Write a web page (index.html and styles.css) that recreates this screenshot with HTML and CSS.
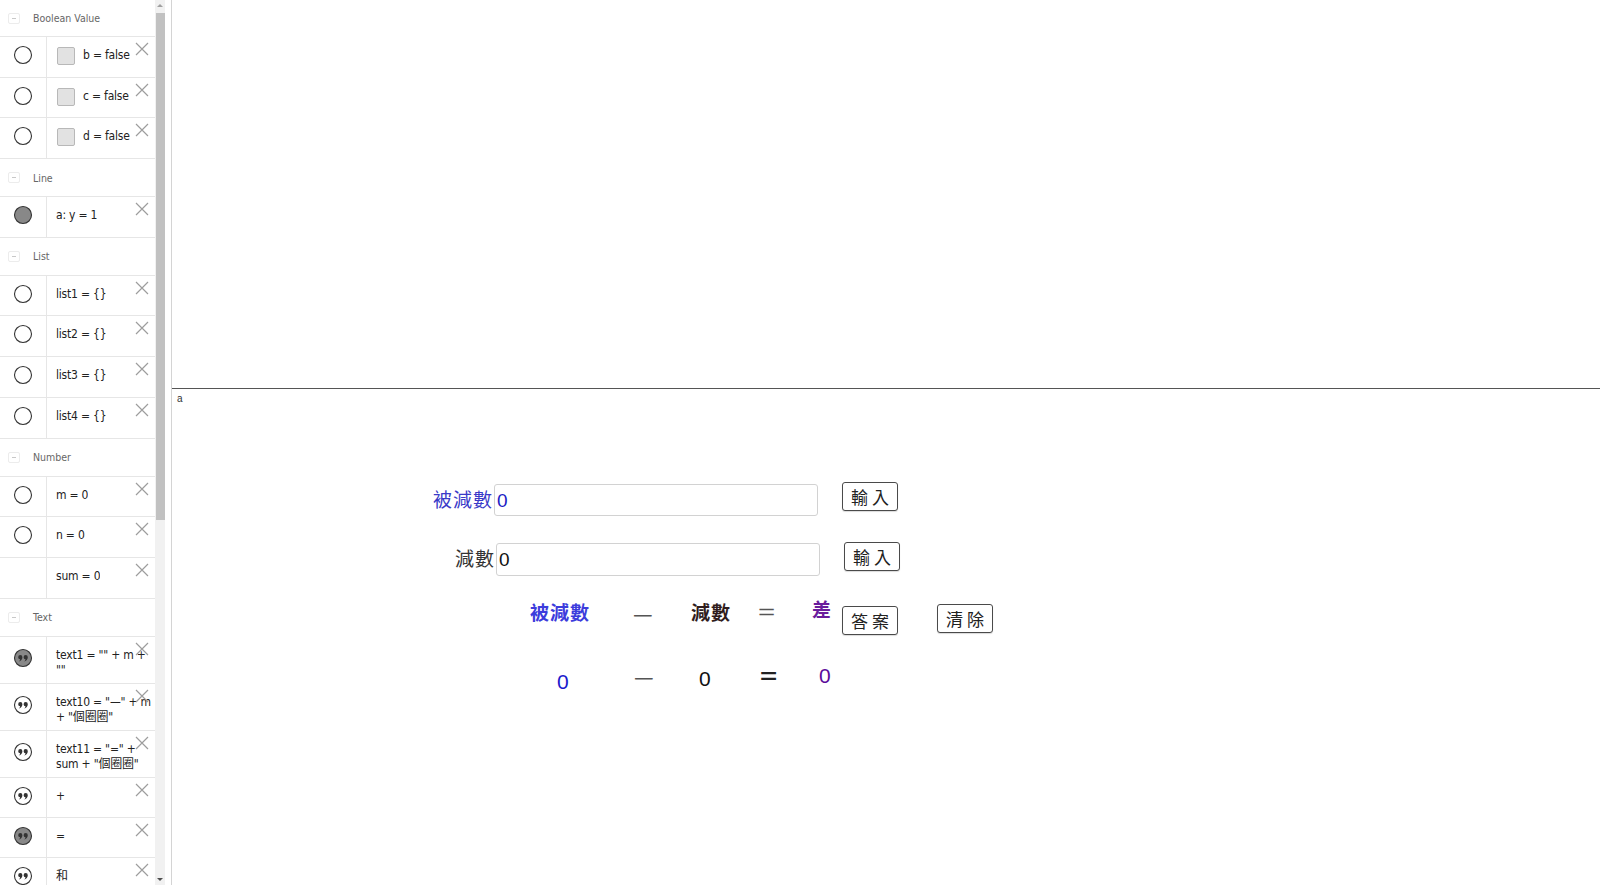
FILE: index.html
```html
<!DOCTYPE html>
<html lang="zh-Hant">
<head>
    <meta charset="UTF-8">
    <title>被減數 減數 = 差</title>
    <link rel="stylesheet" href="styles.css">
</head>
<body>

    <!-- Algebra view -->
    <aside class="algebra">
        <div class="group"><span class="toggle"></span>Boolean Value</div>
        <div class="item">
            <div class="marble"><svg width="20" height="20"><circle cx="10" cy="10" r="8.5" class="ring"/></svg></div>
            <div class="item-body"><span class="check"></span>b = false</div>
            <svg class="del" width="14" height="14"><path d="M1 1 L13 13 M13 1 L1 13"/></svg>
        </div>
        <div class="item">
            <div class="marble"><svg width="20" height="20"><circle cx="10" cy="10" r="8.5" class="ring"/></svg></div>
            <div class="item-body"><span class="check"></span>c = false</div>
            <svg class="del" width="14" height="14"><path d="M1 1 L13 13 M13 1 L1 13"/></svg>
        </div>
        <div class="item">
            <div class="marble"><svg width="20" height="20"><circle cx="10" cy="10" r="8.5" class="ring"/></svg></div>
            <div class="item-body"><span class="check"></span>d = false</div>
            <svg class="del" width="14" height="14"><path d="M1 1 L13 13 M13 1 L1 13"/></svg>
        </div>

        <div class="group"><span class="toggle"></span>Line</div>
        <div class="item">
            <div class="marble"><svg width="20" height="20"><circle cx="10" cy="10" r="8.5" class="ring on"/></svg></div>
            <div class="item-body">a: y = 1</div>
            <svg class="del" width="14" height="14"><path d="M1 1 L13 13 M13 1 L1 13"/></svg>
        </div>

        <div class="group"><span class="toggle"></span>List</div>
        <div class="item">
            <div class="marble"><svg width="20" height="20"><circle cx="10" cy="10" r="8.5" class="ring"/></svg></div>
            <div class="item-body">list1 = {}</div>
            <svg class="del" width="14" height="14"><path d="M1 1 L13 13 M13 1 L1 13"/></svg>
        </div>
        <div class="item">
            <div class="marble"><svg width="20" height="20"><circle cx="10" cy="10" r="8.5" class="ring"/></svg></div>
            <div class="item-body">list2 = {}</div>
            <svg class="del" width="14" height="14"><path d="M1 1 L13 13 M13 1 L1 13"/></svg>
        </div>
        <div class="item">
            <div class="marble"><svg width="20" height="20"><circle cx="10" cy="10" r="8.5" class="ring"/></svg></div>
            <div class="item-body">list3 = {}</div>
            <svg class="del" width="14" height="14"><path d="M1 1 L13 13 M13 1 L1 13"/></svg>
        </div>
        <div class="item">
            <div class="marble"><svg width="20" height="20"><circle cx="10" cy="10" r="8.5" class="ring"/></svg></div>
            <div class="item-body">list4 = {}</div>
            <svg class="del" width="14" height="14"><path d="M1 1 L13 13 M13 1 L1 13"/></svg>
        </div>

        <div class="group"><span class="toggle"></span>Number</div>
        <div class="item">
            <div class="marble"><svg width="20" height="20"><circle cx="10" cy="10" r="8.5" class="ring"/></svg></div>
            <div class="item-body">m = 0</div>
            <svg class="del" width="14" height="14"><path d="M1 1 L13 13 M13 1 L1 13"/></svg>
        </div>
        <div class="item">
            <div class="marble"><svg width="20" height="20"><circle cx="10" cy="10" r="8.5" class="ring"/></svg></div>
            <div class="item-body">n = 0</div>
            <svg class="del" width="14" height="14"><path d="M1 1 L13 13 M13 1 L1 13"/></svg>
        </div>
        <div class="item">
            <div class="marble"></div>
            <div class="item-body">sum = 0</div>
            <svg class="del" width="14" height="14"><path d="M1 1 L13 13 M13 1 L1 13"/></svg>
        </div>

        <div class="group"><span class="toggle"></span>Text</div>
        <div class="item tall">
            <div class="marble"><svg width="20" height="20"><circle cx="10" cy="10" r="8.5" class="ring on"/><path class="quote" d="M5.2 9.2a2.1 2.1 0 1 1 4.2 0c0 2.3-1.5 3.8-3.6 4.3c.9-.7 1.3-1.4 1.3-2.2a2.1 2.1 0 0 1-1.9-2.1zM10.6 9.2a2.1 2.1 0 1 1 4.2 0c0 2.3-1.5 3.8-3.6 4.3c.9-.7 1.3-1.4 1.3-2.2a2.1 2.1 0 0 1-1.9-2.1z"/></svg></div>
            <div class="item-body">text1 = "" + m +<br>""</div>
            <svg class="del" width="14" height="14"><path d="M1 1 L13 13 M13 1 L1 13"/></svg>
        </div>
        <div class="item tall">
            <div class="marble"><svg width="20" height="20"><circle cx="10" cy="10" r="8.5" class="ring"/><path class="quote" d="M5.2 9.2a2.1 2.1 0 1 1 4.2 0c0 2.3-1.5 3.8-3.6 4.3c.9-.7 1.3-1.4 1.3-2.2a2.1 2.1 0 0 1-1.9-2.1zM10.6 9.2a2.1 2.1 0 1 1 4.2 0c0 2.3-1.5 3.8-3.6 4.3c.9-.7 1.3-1.4 1.3-2.2a2.1 2.1 0 0 1-1.9-2.1z"/></svg></div>
            <div class="item-body">text10 = "—" + m<br>+ "個圈圈"</div>
            <svg class="del" width="14" height="14"><path d="M1 1 L13 13 M13 1 L1 13"/></svg>
        </div>
        <div class="item tall">
            <div class="marble"><svg width="20" height="20"><circle cx="10" cy="10" r="8.5" class="ring"/><path class="quote" d="M5.2 9.2a2.1 2.1 0 1 1 4.2 0c0 2.3-1.5 3.8-3.6 4.3c.9-.7 1.3-1.4 1.3-2.2a2.1 2.1 0 0 1-1.9-2.1zM10.6 9.2a2.1 2.1 0 1 1 4.2 0c0 2.3-1.5 3.8-3.6 4.3c.9-.7 1.3-1.4 1.3-2.2a2.1 2.1 0 0 1-1.9-2.1z"/></svg></div>
            <div class="item-body">text11 = "=" +<br>sum + "個圈圈"</div>
            <svg class="del" width="14" height="14"><path d="M1 1 L13 13 M13 1 L1 13"/></svg>
        </div>
        <div class="item short">
            <div class="marble"><svg width="20" height="20"><circle cx="10" cy="10" r="8.5" class="ring"/><path class="quote" d="M5.2 9.2a2.1 2.1 0 1 1 4.2 0c0 2.3-1.5 3.8-3.6 4.3c.9-.7 1.3-1.4 1.3-2.2a2.1 2.1 0 0 1-1.9-2.1zM10.6 9.2a2.1 2.1 0 1 1 4.2 0c0 2.3-1.5 3.8-3.6 4.3c.9-.7 1.3-1.4 1.3-2.2a2.1 2.1 0 0 1-1.9-2.1z"/></svg></div>
            <div class="item-body">+</div>
            <svg class="del" width="14" height="14"><path d="M1 1 L13 13 M13 1 L1 13"/></svg>
        </div>
        <div class="item short">
            <div class="marble"><svg width="20" height="20"><circle cx="10" cy="10" r="8.5" class="ring on"/><path class="quote" d="M5.2 9.2a2.1 2.1 0 1 1 4.2 0c0 2.3-1.5 3.8-3.6 4.3c.9-.7 1.3-1.4 1.3-2.2a2.1 2.1 0 0 1-1.9-2.1zM10.6 9.2a2.1 2.1 0 1 1 4.2 0c0 2.3-1.5 3.8-3.6 4.3c.9-.7 1.3-1.4 1.3-2.2a2.1 2.1 0 0 1-1.9-2.1z"/></svg></div>
            <div class="item-body">=</div>
            <svg class="del" width="14" height="14"><path d="M1 1 L13 13 M13 1 L1 13"/></svg>
        </div>
        <div class="item short">
            <div class="marble"><svg width="20" height="20"><circle cx="10" cy="10" r="8.5" class="ring"/><path class="quote" d="M5.2 9.2a2.1 2.1 0 1 1 4.2 0c0 2.3-1.5 3.8-3.6 4.3c.9-.7 1.3-1.4 1.3-2.2a2.1 2.1 0 0 1-1.9-2.1zM10.6 9.2a2.1 2.1 0 1 1 4.2 0c0 2.3-1.5 3.8-3.6 4.3c.9-.7 1.3-1.4 1.3-2.2a2.1 2.1 0 0 1-1.9-2.1z"/></svg></div>
            <div class="item-body">和</div>
            <svg class="del" width="14" height="14"><path d="M1 1 L13 13 M13 1 L1 13"/></svg>
        </div>
    </aside>

    <!-- Scrollbar of the algebra view -->
    <div class="scrollbar">
        <span class="arrow up"></span>
        <span class="thumb"></span>
        <span class="arrow down"></span>
    </div>
    <div class="splitter"></div>

    <!-- Graphics view -->
    <main class="graphics">
        <div class="line-a"></div>
        <span class="line-label">a</span>

        <span class="cv label-minuend">被減數</span>
        <div class="cv field field-1"><span class="val blue">0</span></div>
        <button class="cv btn btn-in-1">輸入</button>

        <span class="cv label-sub">減數</span>
        <div class="cv field field-2"><span class="val">0</span></div>
        <button class="cv btn btn-in-2">輸入</button>

        <span class="cv head head-minuend">被減數</span>
        <span class="cv dash dash-1">—</span>
        <span class="cv head head-sub">減數</span>
        <span class="cv eq eq-1">=</span>
        <span class="cv head head-diff">差</span>
        <button class="cv btn btn-answer">答案</button>
        <button class="cv btn btn-clear">清除</button>

        <span class="cv num num-m">0</span>
        <span class="cv dash dash-2">—</span>
        <span class="cv num num-n">0</span>
        <span class="cv eq eq-2">=</span>
        <span class="cv num num-sum">0</span>
    </main>

</body>
</html>
```

FILE: styles.css
```css
/* Page layout: algebra view | scrollbar | splitter | graphics */
body {
    margin: 0;
    height: 885px;
    display: flex;
    overflow: hidden;
    background-color: #fff;
    font-family: "DejaVu Sans Condensed", "Liberation Sans Narrow", "Liberation Sans", "Noto Sans CJK TC", sans-serif;
    font-stretch: condensed;
}

/* Algebra view */
.algebra {
    width: 155px;
    flex: none;
    height: 885px;
    overflow: hidden;
    color: #222;
    font-size: 12px;
    letter-spacing: -0.2px;
}

.group {
    height: 38px;
    box-sizing: border-box;
    display: flex;
    align-items: center;
    padding-left: 8px;
    color: #666;
    font-size: 10.5px;
    letter-spacing: 0;
    border-bottom: 1px solid #e6e6e6;
}

.group:first-child {
    height: 37px;
}

.toggle {
    width: 12px;
    height: 11px;
    box-sizing: border-box;
    border: 1px solid #ececec;
    border-radius: 2px;
    margin-right: 13px;
    position: relative;
}

.toggle::after {
    content: "";
    position: absolute;
    left: 3px;
    right: 3px;
    top: 4px;
    height: 1px;
    background-color: #c8c8c8;
}

.item {
    position: relative;
    height: 40.7px;
    box-sizing: border-box;
    display: flex;
    border-bottom: 1px solid #e6e6e6;
}

.item.tall {
    height: 47.3px;
}

.item.short {
    height: 40px;
}

.marble {
    width: 47px;
    flex: none;
    box-sizing: border-box;
    border-right: 1px solid #e6e6e6;
    display: flex;
    justify-content: center;
    padding-top: 8px;
    padding-right: 1px;
}

.item.tall .marble {
    padding-top: 11px;
}

.ring {
    fill: #fff;
    stroke: #333;
    stroke-width: 1.1;
}

.ring.on {
    fill: #888;
}

.quote {
    fill: #333;
}

.item-body {
    padding: 11px 0 0 9px;
    line-height: 15px;
    white-space: nowrap;
    overflow: hidden;
    display: flex;
    align-items: flex-start;
}

.item.tall .item-body {
    display: block;
}

.check {
    width: 18px;
    height: 18px;
    box-sizing: border-box;
    background-color: #e2e2e2;
    border: 1px solid #b8b8b8;
    border-radius: 2px;
    margin: 0 8px 0 1px;
    position: relative;
    top: -1px;
}

.del {
    position: absolute;
    right: 6px;
    top: 5px;
    fill: none;
    stroke: #9d9d9d;
    stroke-width: 1.2;
}

/* Scrollbar */
.scrollbar {
    width: 10px;
    flex: none;
    background-color: #f1f1f1;
    display: flex;
    flex-direction: column;
    align-items: center;
}

.arrow {
    width: 0;
    height: 0;
    border-left: 3px solid transparent;
    border-right: 3px solid transparent;
}

.arrow.up {
    border-bottom: 3px solid #a0a0a0;
    margin: 4px 0 6px;
}

.arrow.down {
    border-top: 3px solid #505050;
    margin-top: auto;
    margin-bottom: 4px;
}

.thumb {
    width: 9px;
    height: 507px;
    background-color: #c1c1c1;
}

.splitter {
    width: 6px;
    flex: none;
    border-right: 1px solid #d4d4d4;
}

/* Graphics view: objects sit at their canvas coordinates */
.graphics {
    flex: 1;
    position: relative;
    overflow: hidden;
}

.line-a {
    position: absolute;
    left: 0;
    right: 0;
    top: 388px;
    height: 1px;
    background-color: #555;
}

.line-label {
    position: absolute;
    left: 5px;
    top: 393px;
    font-size: 10px;
    color: #333;
    font-family: "Liberation Sans", sans-serif;
}

.cv {
    position: absolute;
    line-height: 1;
    white-space: nowrap;
    font-family: "Noto Sans CJK TC", sans-serif;
}

.label-minuend {
    left: 261px;
    top: 489px;
    font-size: 19px;
    letter-spacing: 1px;
    color: #3a3ac8;
}

.label-sub {
    left: 283px;
    top: 548px;
    font-size: 19px;
    letter-spacing: 1px;
    color: #333;
}

.field {
    height: 32px;
    width: 324px;
    box-sizing: border-box;
    border: 1px solid #d2d2d2;
    border-radius: 3px;
    background-color: #fff;
    display: flex;
    align-items: center;
    padding-left: 2px;
}

.field-1 {
    left: 322px;
    top: 484px;
}

.field-2 {
    left: 324px;
    top: 543px;
    height: 33px;
}

.val {
    font-family: "Liberation Sans", sans-serif;
    font-size: 19px;
    color: #111;
}

.val.blue {
    color: #1c1cc4;
}

.btn {
    width: 56px;
    height: 29px;
    box-sizing: border-box;
    padding: 0;
    border: 1px solid #4a4a4a;
    border-radius: 3px;
    background-color: #fff;
    box-shadow: 0 1px 1px rgba(0, 0, 0, 0.15);
    font-size: 17px;
    letter-spacing: 4px;
    text-indent: 4px;
    color: #222;
}

.btn-in-1 {
    left: 670px;
    top: 482px;
}

.btn-in-2 {
    left: 672px;
    top: 542px;
}

.btn-answer {
    left: 670px;
    top: 606px;
}

.btn-clear {
    left: 765px;
    top: 604px;
}

.head {
    font-size: 19px;
    font-weight: bold;
    letter-spacing: 1px;
}

.head-minuend {
    left: 358px;
    top: 602px;
    color: #3c3cdc;
}

.head-sub {
    left: 519px;
    top: 602px;
    color: #301c1c;
}

.head-diff {
    left: 640px;
    top: 599px;
    color: #6a1c9c;
}

.dash {
    font-size: 22px;
    color: #555;
}

.dash-1 {
    left: 461px;
    top: 601px;
}

.dash-2 {
    left: 462px;
    top: 664px;
}

/* wide equals sign, as drawn on the canvas */
.eq {
    font-family: "Liberation Sans", sans-serif;
    font-size: 21px;
    color: #555;
    transform: scaleX(1.4);
    transform-origin: left center;
}

.eq-1 {
    left: 586px;
    top: 601px;
}

.eq-2 {
    left: 588px;
    top: 665px;
    font-weight: bold;
    color: #222;
}

.num {
    font-family: "Liberation Sans", sans-serif;
    font-size: 21px;
}

.num-m {
    left: 385px;
    top: 671px;
    color: #1a1acc;
}

.num-n {
    left: 527px;
    top: 668px;
    color: #111;
}

.num-sum {
    left: 647px;
    top: 665px;
    color: #5a0a9a;
}
```
